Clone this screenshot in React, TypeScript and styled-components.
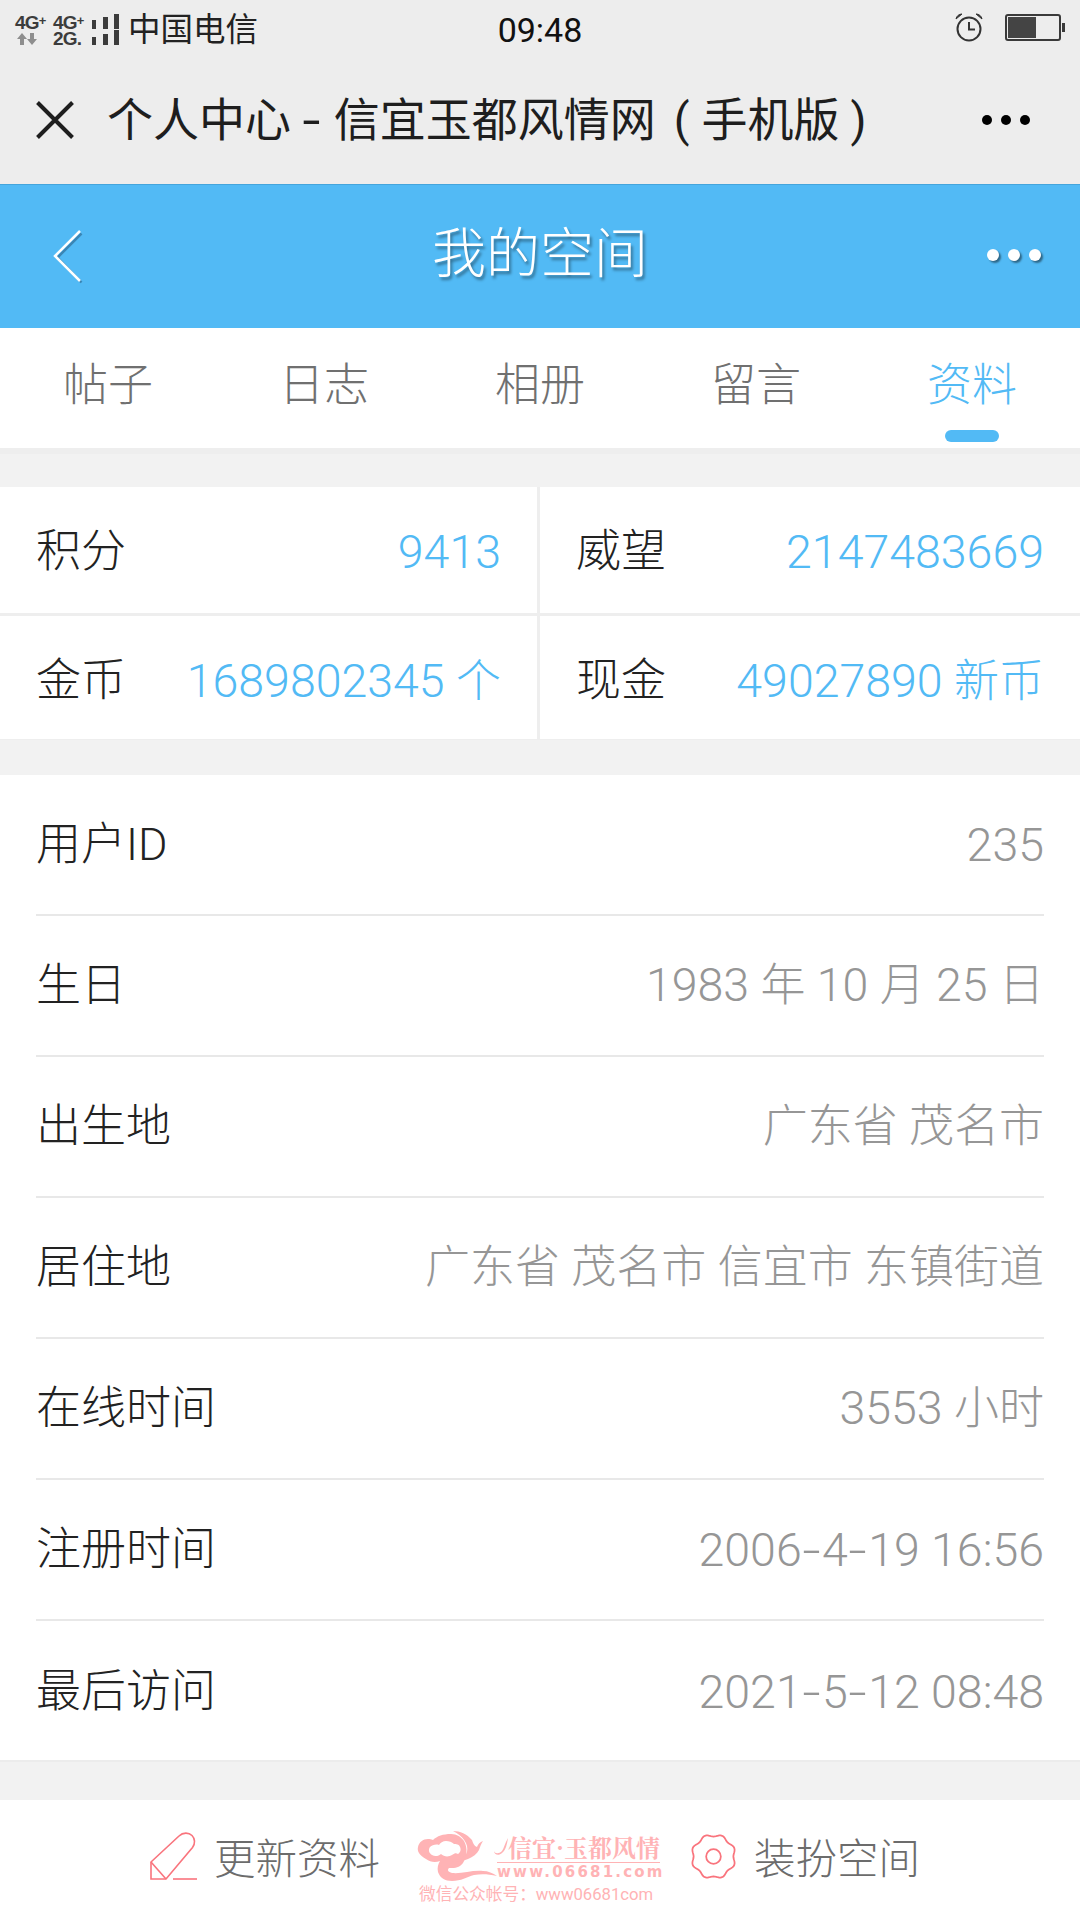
import styled, { createGlobalStyle } from 'styled-components';

const FONT = `Roboto, "Noto Sans CJK SC", sans-serif`;
const BLUE = '#52baf5';
const PINK = '#f9747d';
const LOGO_PINK = '#ffb3b5';

const GlobalStyle = createGlobalStyle`
  html, body {
    margin: 0;
    padding: 0;
    background: #f2f2f2;
  }
  * {
    box-sizing: border-box;
  }
`;

const Page = styled.div`
  width: 1080px;
  height: 1920px;
  overflow: hidden;
  display: flex;
  flex-direction: column;
  background: #f2f2f2;
  font-family: ${FONT};
`;

const StatusBar = styled.div`
  height: 60px;
  background: #ededed;
  display: grid;
  grid-template-columns: 1fr auto 1fr;
  align-items: center;
`;
const StatusLeft = styled.div`
  display: flex;
  align-items: center;
  padding-left: 15px;
  height: 60px;
`;
const NetColumn = styled.div<{ $width: number }>`
  width: ${({ $width }) => $width}px;
  height: 32px;
  display: flex;
  flex-direction: column;
  margin-top: -3px;
`;
const NetLine = styled.span`
  font: bold 19px/16px "Liberation Sans", sans-serif;
  color: #3c3c3c;
  letter-spacing: -0.8px;
  white-space: nowrap;
`;
const Sup = styled.span`
  font-size: 13px;
  vertical-align: 4px;
`;
const Arrows = styled.svg`
  margin: 2px 0 0 2px;
`;
const Carrier = styled.span`
  font-size: 32.5px;
  line-height: 60px;
  color: #222;
  margin-left: 9px;
  white-space: nowrap;
`;
const Clock = styled.span`
  font-size: 34px;
  color: #111;
  line-height: 60px;
`;
const StatusRight = styled.div`
  display: flex;
  justify-content: flex-end;
  align-items: center;
  gap: 22px;
  padding-right: 15px;
  margin-top: -6px;
`;

const TitleBar = styled.div`
  height: 124px;
  background: #ededed;
  display: flex;
  align-items: center;
  padding: 0 50px 4px 36px;
`;
const PageTitle = styled.div`
  flex: 1;
  margin-left: 33px;
  font-size: 46px;
  line-height: 60px;
  color: #1e1e1e;
  white-space: nowrap;
`;
const Dash = styled.span`
  display: inline-block;
  margin: 0 16px 0 14px;
  transform: scaleX(1.4);
`;
const Paren = styled.span`
  margin: 0 12px 0 18px;
`;
const ParenEnd = styled.span`
  margin-left: 11px;
`;
const DotRow = styled.div<{ $color: string; $size: number; $gap: number; $shadow?: boolean }>`
  display: flex;
  gap: ${({ $gap }) => $gap}px;
  span {
    display: block;
    width: ${({ $size }) => $size}px;
    height: ${({ $size }) => $size}px;
    border-radius: 50%;
    background: ${({ $color }) => $color};
    box-shadow: ${({ $shadow }) => ($shadow ? '2px 2px 2px rgba(0, 0, 0, 0.45)' : 'none')};
  }
`;

const BlueHeader = styled.div`
  height: 144px;
  background: ${BLUE};
  border-top: 1px solid #45a5dc;
  display: grid;
  grid-template-columns: 1fr auto 1fr;
  align-items: center;
  padding: 0 39px;
`;
const BackSlot = styled.div`
  display: flex;
  padding-left: 14px;
`;
const HeaderTitle = styled.div`
  font-size: 54px;
  font-weight: 300;
  line-height: 70px;
  color: #fff;
  text-shadow: 2px 3px 3px rgba(0, 0, 0, 0.4);
  margin-top: -4px;
`;
const HeaderRight = styled.div`
  display: flex;
  justify-content: flex-end;
  margin-top: -3px;
`;

const Tabs = styled.div`
  height: 126px;
  background: #fff;
  border-bottom: 6px solid #eeeeee;
  display: grid;
  grid-template-columns: repeat(5, 1fr);
`;
const Tab = styled.div<{ $active?: boolean }>`
  position: relative;
  text-align: center;
  font-size: 45px;
  font-weight: 300;
  line-height: 116px;
  color: ${({ $active }) => ($active ? BLUE : '#707070')};
  &::after {
    content: '';
    display: ${({ $active }) => ($active ? 'block' : 'none')};
    position: absolute;
    left: 50%;
    bottom: 6px;
    width: 54px;
    height: 12px;
    margin-left: -27px;
    border-radius: 6px;
    background: ${BLUE};
  }
`;

const StatGrid = styled.div`
  margin-top: 33px;
  display: grid;
  grid-template-columns: 537px 1fr;
  grid-template-rows: 126px 123px;
  gap: 3px 3px;
  background: #eeeeee;
  border-bottom: 1px solid #eeeeee;
`;
const StatCell = styled.div`
  background: #fff;
  display: flex;
  justify-content: space-between;
  align-items: center;
  padding: 3px 36px 0;
  &:nth-child(n + 3) {
    padding-top: 7px;
  }
`;
const Label = styled.span`
  font-size: 45px;
  font-weight: 300;
  line-height: 60px;
  color: #222;
  white-space: nowrap;
`;
const Value = styled.span<{ $color: string }>`
  font-size: 46.5px;
  line-height: 60px;
  font-weight: 300;
  color: ${({ $color }) => $color};
  white-space: nowrap;
`;
const CjkRun = styled.span`
  font-size: 45px;
`;
const Hyphen = styled.span`
  display: inline-block;
  margin: 0 3.5px;
  transform: scaleX(1.4);
`;

const InfoList = styled.div`
  margin-top: 35px;
  background: #fff;
  padding: 0 36px;
  height: 987px;
  border-bottom: 2px solid #ececec;
`;
const InfoRow = styled.div`
  height: 141px;
  display: flex;
  justify-content: space-between;
  align-items: center;
  border-bottom: 2px solid #e8e8e8;
  &:last-child {
    border-bottom: none;
  }
`;

const Footer = styled.div`
  margin-top: 38px;
  flex: 1;
  background: #fff;
  display: flex;
  align-items: flex-start;
  padding: 32px 0 0 150px;
`;
const FooterItem = styled.div`
  display: flex;
  align-items: center;
  gap: 17px;
  height: 48px;
  flex: none;
`;
const FooterLabel = styled.span`
  font-size: 41.5px;
  font-weight: 300;
  color: #6c6c6c;
  white-space: nowrap;
`;
const Logo = styled.div`
  flex: none;
  width: 243px;
  margin: -2px 30px 0 37px;
  display: flex;
  flex-direction: column;
`;
const LogoTop = styled.div`
  display: flex;
  height: 54px;
`;
const LogoText = styled.div`
  flex: none;
  width: 163px;
  display: flex;
  flex-direction: column;
`;
const LogoName = styled.div`
  display: flex;
  align-items: flex-end;
  height: 33px;
  font: bold 24px/30px "Noto Serif CJK SC", "Noto Sans CJK SC", serif;
  color: ${LOGO_PINK};
  white-space: nowrap;
  border-bottom: 1px solid ${LOGO_PINK};
`;
const LogoUrl = styled.div`
  font: bold 15px/19px "DejaVu Sans", sans-serif;
  letter-spacing: 2.2px;
  color: ${LOGO_PINK};
  white-space: nowrap;
`;
const LogoCaption = styled.div`
  margin: 1px 0 0 2px;
  font-size: 16.7px;
  line-height: 20px;
  color: ${LOGO_PINK};
  white-space: nowrap;
`;

const stats = [
  { label: '积分', value: '9413' },
  { label: '威望', value: '2147483669' },
  { label: '金币', value: '1689802345 个' },
  { label: '现金', value: '49027890 新币' },
];

const rows = [
  { label: '用户ID', value: '235' },
  { label: '生日', value: '1983 年 10 月 25 日' },
  { label: '出生地', value: '广东省 茂名市' },
  { label: '居住地', value: '广东省 茂名市 信宜市 东镇街道' },
  { label: '在线时间', value: '3553 小时' },
  { label: '注册时间', value: '2006-4-19 16:56' },
  { label: '最后访问', value: '2021-5-12 08:48' },
];

const tabs = ['帖子', '日志', '相册', '留言', '资料'];

// digits in the reference run a little larger than the hanzi next to them, and its hyphens are wider
const Mixed = ({ text }: { text: string }) => (
  <>
    {text.split(/([\u4e00-\u9fff]+|-)/).map((part, i) => {
      if (i % 2 === 0) return part;
      return part === '-' ? <Hyphen key={i}>-</Hyphen> : <CjkRun key={i}>{part}</CjkRun>;
    })}
  </>
);

const scallopPath = () => {
  const pts = Array.from({ length: 96 }).map((_, i) => {
    const a = (i / 96) * Math.PI * 2;
    const r = 21.6 - 1.3 * Math.cos(a * 8);
    return `${(24 + r * Math.sin(a)).toFixed(2)} ${(24 - r * Math.cos(a)).toFixed(2)}`;
  });
  return `M${pts.join('L')}Z`;
};

const SignalIcon = () => (
  <svg width="27" height="32" viewBox="0 0 27 32" fill="#3c3c3c">
    <rect x="0" y="6" width="4" height="9" />
    <rect x="11" y="3" width="5" height="12" />
    <rect x="22" y="0" width="5" height="15" />
    <rect x="0" y="23" width="4" height="8" />
    <rect x="11" y="20" width="5" height="11" />
    <rect x="22" y="16" width="5" height="15" />
  </svg>
);

const ArrowsIcon = () => (
  <Arrows width="20" height="12" viewBox="0 0 20 12" fill="#8e8e8e">
    <path d="M5 0l5 6H7v6H3V6H0z" />
    <path d="M15 12l5-6h-3V0h-4v6h-3z" />
  </Arrows>
);

const AlarmIcon = () => (
  <svg width="28" height="29" viewBox="0 0 28 29" fill="none" stroke="#333">
    <circle cx="14" cy="16" r="11.5" strokeWidth="2" />
    <path d="M14 9v7.5h6" strokeWidth="2" />
    <path d="M1 6c.5-3 3-5 6-5z" fill="#333" strokeWidth="1" />
    <path d="M27 6c-.5-3-3-5-6-5z" fill="#333" strokeWidth="1" />
  </svg>
);

const BatteryIcon = () => (
  <svg width="60" height="27" viewBox="0 0 60 27">
    <rect x="1" y="1" width="54" height="25" rx="2" fill="none" stroke="#3a3a3a" strokeWidth="2" />
    <rect x="3" y="3" width="28" height="21" fill="#444" />
    <rect x="57" y="9" width="3" height="9" fill="#3a3a3a" />
  </svg>
);

const CloseIcon = () => (
  <svg width="38" height="38" viewBox="0 0 38 38" stroke="#1e1e1e" strokeWidth="4" fill="none">
    <path d="M1.500 1.500l35 35M36.500 1.500l-35 35" />
  </svg>
);

const BackIcon = () => (
  <svg width="32" height="56" viewBox="0 0 32 56" fill="none" strokeWidth="2.5">
    <path d="M27 3L3 27l24 25" stroke="#3a86b5" transform="translate(1.5 1.5)" />
    <path d="M27 2L2 27l25 25" stroke="#fff" />
  </svg>
);

const PencilIcon = () => (
  <svg width="47" height="48" viewBox="0 0 47 48" fill="none" stroke={PINK} strokeWidth="1.6">
    <path d="M1 30L29 4c4-4 10-3.500 13-.5s3.500 8 .5 12L16 47H1z" />
    <path d="M1 30l15 17" />
    <path d="M23 47h24" />
  </svg>
);

const FlowerIcon = () => (
  <svg width="47" height="47" viewBox="0 0 48 48" fill="none" stroke={PINK} strokeWidth="1.8">
    <path d={scallopPath()} />
    <circle cx="24" cy="24" r="7.500" />
  </svg>
);

const CloudLogo = () => (
  <svg width="80" height="52" viewBox="0 0 80 52" style={{ flex: 'none' }}>
    <path
      fill={LOGO_PINK}
      fillRule="evenodd"
      d="M34 4c6 0 10 3 13 7 4 7 3 16-1 22-2 3-6 5-11 5h-3c-2 2-1 4 3 5 10 1 20-3 31-2 5 0 10 2 14 5-9-2-16-2-23-1-7 2-13 6-22 6-7 0-12-3-14-9-1-4 0-8 2-11-5 2-10 1-14-2C2 25 0 21 1 17c1-5 5-8 10-8 2 0 3 0 5 1 4-4 10-6 18-6zM29 11c-3 0-6 2-7 4-3-1-7 0-9 2-2 3-1 6 2 8 3 2 7 1 9-1 3 3 8 3 11 1 3-2 4-2 6-1 3-2 3-5 2-7-1-3-4-3-6-3-2-2-5-3-8-3z"
    />
    <path fill={LOGO_PINK} d="M36 1c7 0 14 3 19 9 1 3 2 6 5 7 1-3 3-5 6-6-2 3-3 6-4 9-2 4-6 7-11 9-5 2-11 3-17 2 8-1 14-3 16-9 2-8-4-16-14-21z" />
    <path fill={LOGO_PINK} d="M33 31c4-2 9-2 14-1-3 1-8 2-14 1z" />
  </svg>
);

const Flourish = () => (
  <svg width="14" height="20" viewBox="0 0 14 20" fill={LOGO_PINK} style={{ flex: 'none', margin: '0 0 5px -3px' }}>
    <path d="M0 14c1 3 5 3 8 0 2-3 3-8 6-13-1 6-2 12-6 15-3 3-8 2-8-2z" />
  </svg>
);

const App = () => (
  <Page>
    <GlobalStyle />
    <StatusBar>
      <StatusLeft>
        <NetColumn $width={38}>
          <NetLine>
            4G<Sup>+</Sup>
          </NetLine>
          <ArrowsIcon />
        </NetColumn>
        <NetColumn $width={39}>
          <NetLine>
            4G<Sup>+</Sup>
          </NetLine>
          <NetLine>2G.</NetLine>
        </NetColumn>
        <SignalIcon />
        <Carrier>中国电信</Carrier>
      </StatusLeft>
      <Clock>09:48</Clock>
      <StatusRight>
        <AlarmIcon />
        <BatteryIcon />
      </StatusRight>
    </StatusBar>

    <TitleBar>
      <CloseIcon />
      <PageTitle>
        个人中心<Dash>-</Dash>信宜玉都风情网<Paren>(</Paren>手机版<ParenEnd>)</ParenEnd>
      </PageTitle>
      <DotRow $color="#000" $size={10} $gap={9}>
        <span />
        <span />
        <span />
      </DotRow>
    </TitleBar>

    <BlueHeader>
      <BackSlot>
        <BackIcon />
      </BackSlot>
      <HeaderTitle>我的空间</HeaderTitle>
      <HeaderRight>
        <DotRow $color="#fff" $size={12} $gap={9} $shadow>
          <span />
          <span />
          <span />
        </DotRow>
      </HeaderRight>
    </BlueHeader>

    <Tabs>
      {tabs.map((t) => (
        <Tab key={t} $active={t === '资料'}>
          {t}
        </Tab>
      ))}
    </Tabs>

    <StatGrid>
      {stats.map((s) => (
        <StatCell key={s.label}>
          <Label>{s.label}</Label>
          <Value $color={BLUE}>
            <Mixed text={s.value} />
          </Value>
        </StatCell>
      ))}
    </StatGrid>

    <InfoList>
      {rows.map((r) => (
        <InfoRow key={r.label}>
          <Label>{r.label}</Label>
          <Value $color="#969696">
            <Mixed text={r.value} />
          </Value>
        </InfoRow>
      ))}
    </InfoList>

    <Footer>
      <FooterItem>
        <PencilIcon />
        <FooterLabel>更新资料</FooterLabel>
      </FooterItem>
      <Logo>
        <LogoTop>
          <CloudLogo />
          <LogoText>
            <LogoName>
              <Flourish />
              信宜·玉都风情
            </LogoName>
            <LogoUrl>www.06681.com</LogoUrl>
          </LogoText>
        </LogoTop>
        <LogoCaption>微信公众帐号：www06681com</LogoCaption>
      </Logo>
      <FooterItem>
        <FlowerIcon />
        <FooterLabel>装扮空间</FooterLabel>
      </FooterItem>
    </Footer>
  </Page>
);

export default App;
